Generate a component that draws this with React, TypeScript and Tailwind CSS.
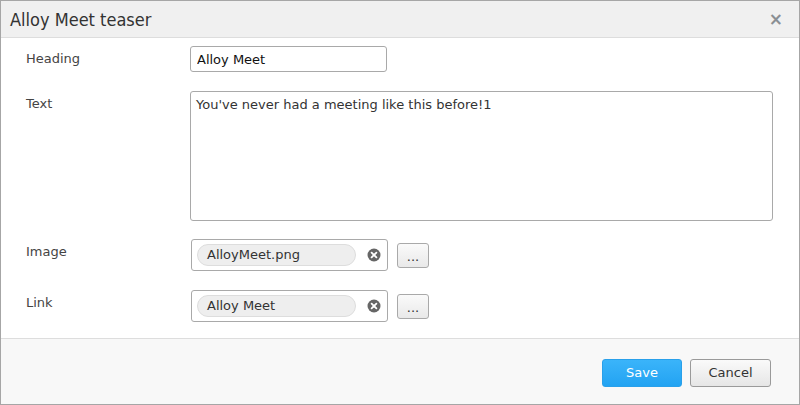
import React from 'react';

const font = { fontFamily: '"DejaVu Sans", Verdana, sans-serif' };

const ClearIcon: React.FC = () => (
  <svg width="14" height="14" viewBox="0 0 14 14" className="shrink-0">
    <circle cx="7" cy="7" r="6.5" fill="#666" />
    <path d="M4.6 4.6 L9.4 9.4 M9.4 4.6 L4.6 9.4" stroke="#fff" strokeWidth="1.8" strokeLinecap="round" />
  </svg>
);

const PickerRow: React.FC<{ label: string; value: string }> = ({ label, value }) => (
  <div className="flex items-start">
    <div className="w-[165px] pt-[3px] text-[13px] text-[#444]">{label}</div>
    <div className="flex items-center gap-[9px]">
      <div className="flex items-center w-[197px] h-[32px] border border-[#a9a9a9] rounded-[3px] pl-[5px] pr-[6px] bg-white">
        <div className="flex items-center w-[159px] h-[22px] rounded-full bg-[#eeeeee] border border-[#dddddd] pl-[9px] text-[13px] text-[#333]">
          {value}
        </div>
        <div className="flex-1 flex justify-end">
          <ClearIcon />
        </div>
      </div>
      <button className="w-[32px] h-[25px] border border-[#a9a9a9] rounded-[3px] bg-gradient-to-b from-[#fafafa] to-[#e9e9e9] text-[13px] text-[#333] leading-none pt-[2px]">
        ...
      </button>
    </div>
  </div>
);

export default function App() {
  return (
    <div className="w-[800px] h-[405px] bg-white border border-[#a6a6a6] flex flex-col" style={font}>
      {/* Header */}
      <div className="h-[37px] shrink-0 bg-[#f0f0f0] border-b border-[#dddddd] flex items-center justify-between pl-[9px] pr-[16px]">
        <h1 className="text-[18px] text-[#333] font-['DejaVu_Sans_Condensed','DejaVu_Sans',sans-serif]">Alloy Meet teaser</h1>
        <span className="text-[17px] font-bold text-[#8a8f94] leading-none">×</span>
      </div>

      {/* Body */}
      <div className="flex-1 flex flex-col pl-[25px] pt-[8px] gap-0">
        <div className="flex items-start">
          <div className="w-[164px] pt-[3px] text-[13px] text-[#444]">Heading</div>
          <input
            defaultValue="Alloy Meet"
            className="w-[197px] h-[26px] border border-[#a9a9a9] rounded-[3px] px-[6px] text-[13px] text-[#111] outline-none"
          />
        </div>

        <div className="flex items-start mt-[19px]">
          <div className="w-[164px] pt-[3px] text-[13px] text-[#444]">Text</div>
          <textarea
            defaultValue="You've never had a meeting like this before!1"
            className="w-[583px] h-[130px] border border-[#a9a9a9] rounded-[3px] px-[5px] py-[3px] text-[13px] text-[#333] outline-none resize-none"
          />
        </div>

        <div className="mt-[18px]">
          <PickerRow label="Image" value="AlloyMeet.png" />
        </div>
        <div className="mt-[19px]">
          <PickerRow label="Link" value="Alloy Meet" />
        </div>
      </div>

      {/* Footer */}
      <div className="h-[66px] shrink-0 bg-[#f8f8f8] border-t border-[#dddddd] flex items-center justify-end gap-[8px] pr-[28px] pt-[3px]">
        <button className="w-[80px] h-[28px] rounded-[3px] border border-[#29a0ea] bg-gradient-to-b from-[#3ab4fa] to-[#22a3f2] text-white text-[13px]">
          Save
        </button>
        <button className="w-[81px] h-[28px] rounded-[3px] border border-[#9a9a9a] bg-gradient-to-b from-[#fafafa] to-[#e6e6e6] text-[#333] text-[13px]">
          Cancel
        </button>
      </div>
    </div>
  );
}
